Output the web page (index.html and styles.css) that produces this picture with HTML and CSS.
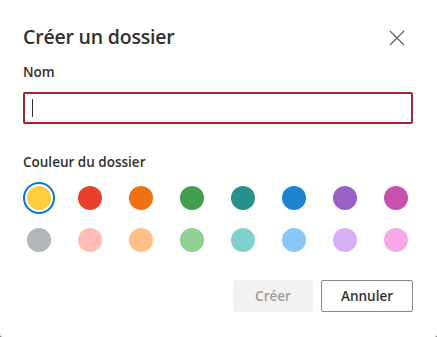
FILE: index.html
```html
<!DOCTYPE html>
<html lang="fr">
<head>
<meta charset="utf-8">
<title>Créer un dossier</title>
<link rel="stylesheet" href="styles.css">
</head>
<body>
<div class="dialog">
  <div class="header">
    <h1 class="title">Créer un dossier</h1>
    <button class="close" aria-label="Fermer">
      <svg width="16" height="16" viewBox="0 0 16 16"><path d="M1 1 L15 15 M15 1 L1 15" stroke="#605e5c" stroke-width="1.2" fill="none"/></svg>
    </button>
  </div>
  <label class="label label-name">Nom</label>
  <div class="input"><span class="caret"></span></div>
  <div class="label label-color">Couleur du dossier</div>
  <div class="swatches">
    <span class="swatch selected"><span class="dot c1"></span></span>
    <span class="swatch"><span class="dot c2"></span></span>
    <span class="swatch"><span class="dot c3"></span></span>
    <span class="swatch"><span class="dot c4"></span></span>
    <span class="swatch"><span class="dot c5"></span></span>
    <span class="swatch"><span class="dot c6"></span></span>
    <span class="swatch"><span class="dot c7"></span></span>
    <span class="swatch"><span class="dot c8"></span></span>
    <span class="swatch"><span class="dot c9"></span></span>
    <span class="swatch"><span class="dot c10"></span></span>
    <span class="swatch"><span class="dot c11"></span></span>
    <span class="swatch"><span class="dot c12"></span></span>
    <span class="swatch"><span class="dot c13"></span></span>
    <span class="swatch"><span class="dot c14"></span></span>
    <span class="swatch"><span class="dot c15"></span></span>
    <span class="swatch"><span class="dot c16"></span></span>
  </div>
  <div class="actions">
    <button class="btn btn-disabled">Créer</button>
    <button class="btn btn-default">Annuler</button>
  </div>
</div>
</body>
</html>
```
FILE: styles.css
```css
html { background: #7a7a72; }
body {
  margin: 0;
  font-family: "Open Sans", "Noto Sans", sans-serif;
  color: #323130;
}
.dialog {
  width: 437px;
  height: 337px;
  box-sizing: border-box;
  background: #fff;
  padding: 23px 24px 0 23px;
  border-radius: 0 0 3px 3px;
}
.header {
  display: flex;
  justify-content: space-between;
  align-items: flex-start;
  height: 28px;
}
.title {
  margin: 0;
  font-size: 19.5px;
  font-weight: 560;
  line-height: 28px;
  letter-spacing: -0.2px;
}
.close {
  border: 0;
  background: none;
  padding: 0;
  margin: 7px 8px 0 0;
  width: 16px;
  height: 16px;
  display: block;
}
.close svg { display: block; }
.label {
  display: block;
  font-size: 13.5px;
  font-weight: 560;
  line-height: 20px;
}
.label-name { margin-top: 11px; }
.input {
  margin-top: 10px;
  height: 32px;
  box-sizing: border-box;
  border: 2px solid #a4262c;
  border-radius: 2px;
  display: flex;
  align-items: center;
  padding-left: 7px;
}
.caret {
  width: 1px;
  height: 18px;
  background: #323130;
}
.label-color { margin-top: 28px; }
.swatches {
  margin-top: 10px;
  display: grid;
  grid-template-columns: repeat(8, 32px);
  column-gap: 19px;
  row-gap: 10px;
}
.swatch {
  width: 32px;
  height: 32px;
  box-sizing: border-box;
  border-radius: 50%;
  display: flex;
  align-items: center;
  justify-content: center;
}
.swatch.selected { border: 2px solid #0078d4; }
.dot {
  width: 24px;
  height: 24px;
  border-radius: 50%;
}
.c1 { background: #ffcd3d; }
.c2 { background: #e8402c; }
.c3 { background: #ef7111; }
.c4 { background: #40a04d; }
.c5 { background: #26928b; }
.c6 { background: #1e83d0; }
.c7 { background: #9a60c6; }
.c8 { background: #c851b0; }
.c9 { background: #b0b6b9; }
.c10 { background: #ffbdb3; }
.c11 { background: #ffbf86; }
.c12 { background: #8fd394; }
.c13 { background: #7dd2cd; }
.c14 { background: #88c7f7; }
.c15 { background: #d6b0f5; }
.c16 { background: #f6a9e6; }
.actions {
  margin-top: 24px;
  display: flex;
  justify-content: flex-end;
  gap: 8px;
}
.btn {
  height: 32px;
  box-sizing: border-box;
  border-radius: 2px;
  font-family: inherit;
  font-size: 13.5px;
  font-weight: 560;
  padding: 0;
}
.btn-disabled {
  width: 80px;
  background: #f3f2f1;
  border: 1px solid #f3f2f1;
  color: #a19f9d;
}
.btn-default {
  width: 92px;
  background: #fff;
  border: 1px solid #8a8886;
  color: #323130;
}
```
